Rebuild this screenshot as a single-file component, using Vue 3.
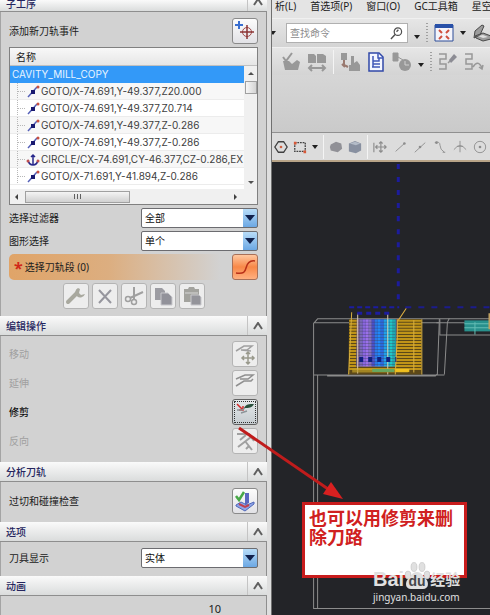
<script setup>
import { ref } from 'vue'

const events = [
  { type: 'goto', text: 'GOTO/X-74.691,Y-49.377,Z20.000' },
  { type: 'goto', text: 'GOTO/X-74.691,Y-49.377,Z0.714' },
  { type: 'goto', text: 'GOTO/X-74.691,Y-49.377,Z-0.286' },
  { type: 'goto', text: 'GOTO/X-74.691,Y-49.377,Z-0.286' },
  { type: 'circle', text: 'CIRCLE/CX-74.691,CY-46.377,CZ-0.286,EX' },
  { type: 'goto', text: 'GOTO/X-71.691,Y-41.894,Z-0.286' },
]
const filter = ref('全部')
const shape = ref('单个')
const toolView = ref('实体')
const menus = ['析(L)', '首选项(P)', '窗口(O)', 'GC工具箱', '星空']
const stripes = Array.from({ length: 17 }, (_, i) => 320 + i * 3)
const passes = [
  [358, '#7a5a8c'], [361, '#7a68b8'], [364, '#8a66e0'], [367, '#9a70e8'], [370, '#8470c0'],
  [373, '#4a50c8'], [376, '#2a78e8'], [379, '#2088f8'], [382, '#2a6ae0'], [385, '#20a0e8'],
  [388, '#18b8e0'], [391, '#20c8c8'], [394, '#20a8b0'],
]
</script>

<template>
  <div class="app">
    <aside class="panel">
      <header class="head clipped"><h2>子工序</h2><button class="fold" aria-label="折叠子工序"><svg viewBox="0 0 10 8"><path d="M1 7 5 1 9 7" /></svg></button></header>
      <section class="body events">
        <div class="row">
          <span>添加新刀轨事件</span>
          <button class="tool" aria-label="添加新刀轨事件">
            <svg viewBox="0 0 24 24"><path d="M6 2v8M2 6h8" stroke="#3a6fd0" stroke-width="2" /><circle cx="14" cy="13" r="4.5" stroke="#a04848" /><path d="M14 6v14M7 13h14" stroke="#8c3434" stroke-width="1.5" /></svg>
          </button>
        </div>
        <div class="list">
          <div class="list-title">名称</div>
          <div class="list-main">
            <ul>
              <li class="selected">CAVITY_MILL_COPY</li>
              <li v-for="(e, i) in events" :key="i">
                <svg viewBox="0 0 31 17">
                  <path d="M7.500 0v17M8 8.500h7" stroke="#b8b8b8" stroke-dasharray="1 1" />
                  <g v-if="e.type === 'goto'"><path d="M18 14 27 4" stroke="#5560b8" stroke-width="1.500" /><path d="M21 7h4v4h-4z" fill="#191970" /><circle cx="28" cy="4" r="1.500" fill="#c85040" /></g>
                  <g v-else><path d="M18 9q1 5 5 5t5-5M23 4v10M21 6l2-2 2 2" stroke="#28288c" stroke-width="1.500" /><circle cx="18" cy="10" r="1.500" fill="#c05050" /><circle cx="28" cy="10" r="1.500" fill="#c05050" /></g>
                </svg>{{ e.text }}
              </li>
            </ul>
            <div class="vbar"><i class="up"></i><i class="thumb"></i><i class="down"></i></div>
          </div>
          <div class="hbar"><i class="left"></i><span class="thumb"><i></i><i></i><i></i></span><i class="right"></i></div>
        </div>
        <div class="row field">
          <label for="filter">选择过滤器</label>
          <span class="combo"><select id="filter" v-model="filter"><option>全部</option></select><i></i></span>
        </div>
        <div class="row field">
          <label for="shape">图形选择</label>
          <span class="combo"><select id="shape" v-model="shape"><option>单个</option></select><i></i></span>
        </div>
        <div class="row segment">
          <span><b>*</b>选择刀轨段 (0)</span>
          <button class="tool orange" aria-label="选择刀轨段"><svg viewBox="0 0 24 24"><path d="M3 18c8 1 9-1 10-5s3-8 9-7" stroke="#b83018" stroke-width="1.500" /></svg></button>
        </div>
        <div class="actions">
          <button class="tool off" aria-label="编辑"><svg viewBox="0 0 24 24"><path d="m4 18 9-9" stroke="#a9a99f" stroke-width="4" stroke-linecap="round" /><path d="M14 4a5 5 0 1 0 7 6l-4 1-2-2 1-4z" fill="#a9a99f" /></svg></button>
          <button class="tool off" aria-label="删除"><svg viewBox="0 0 24 24"><path d="m6 6 12 13M18 6 6 19" stroke="#96969e" stroke-width="2" /></svg></button>
          <button class="tool off" aria-label="剪切"><svg viewBox="0 0 24 24"><path d="M12 3v12M21 8 8 14" stroke="#a0a0a0" stroke-width="2" /><circle cx="6" cy="15" r="2.500" stroke="#a0a0a0" stroke-width="1.500" /><circle cx="12" cy="18" r="2.500" stroke="#a0a0a0" stroke-width="1.500" /></svg></button>
          <button class="tool off" aria-label="复制"><svg viewBox="0 0 24 24"><path d="M4 4h7l3 3v9H4z" fill="#9c9ca2" /><path d="M10 9h7l4 4v8H10z" fill="#92929a" stroke="#c8c8cc" /></svg></button>
          <button class="tool off" aria-label="粘贴"><svg viewBox="0 0 24 24"><path d="M4 5h4l1-2h5l1 2h4v13H4z" fill="#a3a39e" /><path d="M5 9h13" stroke="#d8d8d8" /><path d="M11 11h8l2 2v8H11z" fill="#94949a" stroke="#c8c8cc" /></svg></button>
        </div>
      </section>

      <header class="head"><h2>编辑操作</h2><button class="fold" aria-label="折叠编辑操作"><svg viewBox="0 0 10 8"><path d="M1 7 5 1 9 7" /></svg></button></header>
      <section class="body edits">
        <div class="row off-text"><span>移动</span><button class="tool off" aria-label="移动"><svg viewBox="0 0 24 24"><path d="M3 9 11 4h8l-5 4H8l10 1" stroke="#a0a0a0" stroke-width="1.500" /><path d="M15 10v12M9 16h12M13 12l2-2 2 2M13 20l2 2 2-2M11 14l-2 2 2 2M19 14l2 2-2 2" stroke="#99998c" stroke-width="1.500" /></svg></button></div>
        <div class="row off-text"><span>延伸</span><button class="tool off" aria-label="延伸"><svg viewBox="0 0 24 24"><path d="M3 8 12 4h8l-5 4H7M3 15l8-5h7l2-2" stroke="#909090" stroke-width="1.500" /></svg></button></div>
        <div class="row strong"><span>修剪</span><button class="tool active" aria-label="修剪"><svg viewBox="0 0 24 24"><path d="m4 4 6 6M10 6v4H6" stroke="#d02828" stroke-width="1.500" /><path d="M11 8c2-4 5-4 10-4-2 4-5 4-10 4z" fill="#28503c" /><path d="M4 10h5l3-2M8 13l6-2" stroke="#8c9498" stroke-width="1.500" /></svg></button></div>
        <div class="row off-text"><span>反向</span><button class="tool off" aria-label="反向"><svg viewBox="0 0 24 24"><path d="M4 5h12l5 7M7 11l6-5M5 18 18 8M12 12l7 9M13 20l3-3" stroke="#a0a0a0" stroke-width="2" /></svg></button></div>
      </section>

      <header class="head"><h2>分析刀轨</h2><button class="fold" aria-label="折叠分析刀轨"><svg viewBox="0 0 10 8"><path d="M1 7 5 1 9 7" /></svg></button></header>
      <section class="body check">
        <div class="row"><span>过切和碰撞检查</span><button class="tool" aria-label="过切和碰撞检查"><svg viewBox="0 0 24 24"><path d="m3 16 5-3 6 3 7-3v2l-9 7-9-5z" fill="#8fa4e8" stroke="#5068b8" /><path d="m6 15 6 3 4-2" stroke="#c04050" stroke-width="2" /><path d="M12 4h4v10l-4 2z" fill="#5a66c0" /><path d="m3 7 3 4 5-8" stroke="#48a848" stroke-width="2.500" /></svg></button></div>
      </section>

      <header class="head"><h2>选项</h2><button class="fold" aria-label="折叠选项"><svg viewBox="0 0 10 8"><path d="M1 7 5 1 9 7" /></svg></button></header>
      <section class="body options">
        <div class="row field">
          <label for="tool-view">刀具显示</label>
          <span class="combo"><select id="tool-view" v-model="toolView"><option>实体</option></select><i></i></span>
        </div>
      </section>

      <header class="head"><h2>动画</h2><button class="fold" aria-label="折叠动画"><svg viewBox="0 0 10 8"><path d="M1 7 5 1 9 7" /></svg></button></header>
      <section class="body anim"><span>10</span></section>
    </aside>

    <main class="work">
      <nav class="menus"><a v-for="m in menus" :key="m" href="#">{{ m }}</a></nav>
      <div class="bar search">
        <i class="caret"></i>
        <div class="find">
          <input type="text" placeholder="查找命令" aria-label="查找命令" />
          <svg viewBox="0 0 14 14"><circle cx="8.500" cy="5" r="4" stroke="#505050" stroke-width="1.300" /><path d="M5.500 8 1 13M7 5l2-2" stroke="#505050" stroke-width="1.500" /></svg>
        </div>
        <i class="caret low"></i>
        <i class="grip"></i>
        <svg class="i20" viewBox="0 0 20 20"><path d="M1 2h18v16H1z" fill="#f4f4fa" stroke="#2c4c98" /><path d="M1 3h18" stroke="#2850a8" stroke-width="4" /><path d="M5 7l3 3M15 7l-3 3M5 16l3-3M15 16l-3-3" stroke="#d05040" stroke-width="2" /></svg>
        <i class="caret"></i>
        <svg class="i20" viewBox="0 0 20 20"><path d="m3 8 7-6 2 1-4 9-6 3zM3 13l8-3 8 3v3l-8 2-7-3z" fill="#9c9c9c" stroke="#484848" /><path d="m6 13 5-1 5 2-5 1z" fill="#e0e0e0" /></svg>
      </div>
      <div class="bar machining">
        <svg class="i20" viewBox="0 0 20 20"><path d="m2 5 3 4 6-8" stroke="#989898" stroke-width="2" /><path d="M2 9h6l3 3 5-4 3 2-2 8H4z" fill="#989898" /></svg>
        <svg class="i20" viewBox="0 0 20 20"><path d="M1 2h6l2 2v7H1zM10 2h6l3 2v7h-9z" fill="#989898" /><path d="M2 16h16M5 13l-3 3 3 3M15 13l3 3-3 3" stroke="#989898" stroke-width="2" /></svg>
        <i class="rule"></i>
        <svg class="i20" viewBox="0 0 20 20"><path d="M1 1h6v7H1zM11 4h3v7l3-2 3 4v6H9v-6h2z" fill="#989898" /><path d="M4 8v5l4 2M2 12l3 3" stroke="#9a7a70" stroke-width="2" /></svg>
        <svg class="i20" viewBox="0 0 20 20"><path d="M3 1h10l4 4v14H3z" fill="#f4f6ff" stroke="#3048a8" stroke-width="1.500" /><path d="M12 1v5h5M7 4v11M7 9h6v-3M7 12h7M6 15h8" stroke="#4058b8" stroke-width="1.500" /></svg>
        <svg class="i20" viewBox="0 0 20 20"><path d="M1 1h5v8H1zM6 5l5 3" fill="#989898" stroke="#989898" /><circle cx="13" cy="13" r="6" fill="#989898" /><path d="M13 9v4h4" stroke="#d0d0d0" /></svg>
        <i class="caret low"></i>
        <i class="grip"></i>
        <svg class="i20" viewBox="0 0 20 20"><path d="M1 2h7v5H2v5h6v5H1M10 11l5-5" stroke="#989898" stroke-width="1.500" /><path d="m11 8 5-6 3 3-6 6z" fill="#8c8c94" /></svg>
        <svg class="i20" viewBox="0 0 20 20"><path d="M1 2h7v5H2v5h6v5H1M9 15q5-8 9 1m-3-1 3 2 1-4" stroke="#989898" stroke-width="1.500" /></svg>
      </div>
      <div class="spare"></div>
      <div class="bar picks">
        <svg class="i16" viewBox="0 0 16 16"><path d="M5 2h6l4 6-4 6H5L1 8z" stroke="#404040" stroke-width="1.500" /><circle cx="8" cy="8" r="1.500" fill="#d06040" /></svg>
        <svg class="i16" viewBox="0 0 16 16"><path d="M2 3h12v10H2z" stroke="#404040" stroke-width="1.500" stroke-dasharray="2 1" /><path d="M1 2h3v3H1zM12 12h3v3h-3z" fill="#d85838" /></svg>
        <i class="caret"></i>
        <i class="rule"></i>
        <svg class="i16" viewBox="0 0 16 16"><path d="m2 5 6-3 6 2 1 6-5 4-8-2-1-4z" fill="#909096" /></svg>
        <svg class="i16" viewBox="0 0 16 16"><path d="m1 4 7-3 7 3v8l-6 3-8-2z" fill="#8890a0" /><path d="m2 4 7 2 5-2-6-2z" fill="#b4bcc8" /></svg>
        <i class="rule"></i>
        <div class="snaps">
          <svg class="i16" viewBox="0 0 16 16"><path d="M9 2v12M3 8h12M7 4l2-2 2 2M7 12l2 2 2-2M5 6 3 8l2 2M13 6l2 2-2 2M1 3v11" stroke="#8c8c8c" stroke-width="1.300" /></svg>
          <svg class="i16" viewBox="0 0 16 16"><path d="M3 13 13 4" stroke="#8c8c8c" /><circle cx="13" cy="4" r="1.500" fill="#8c8c8c" /></svg>
          <svg class="i16" viewBox="0 0 16 16"><path d="M2 14 14 3" stroke="#8c8c8c" /><circle cx="8" cy="8" r="1.500" fill="#8c8c8c" /></svg>
          <svg class="i16" viewBox="0 0 16 16"><path d="M2 3q6-2 6 3t5 8M11 14h3" stroke="#8c8c8c" /><circle cx="4" cy="3" r="1.500" fill="#8c8c8c" /></svg>
          <svg class="i16" viewBox="0 0 16 16"><path d="M1 11q7-9 14 0M8 1v13M5 7h6" stroke="#8c8c8c" /></svg>
          <svg class="i16" viewBox="0 0 16 16"><circle cx="8" cy="8" r="6.500" stroke="#8c8c8c" /><circle cx="8" cy="8" r="1.500" fill="#8c8c8c" /></svg>
        </div>
      </div>
      <div class="stage">
        <svg class="scene" viewBox="272 162 218 453" preserveAspectRatio="xMinYMin slice" aria-hidden="true">
          <g stroke="#8c8c8c">
            <path d="M313.500 607V323l4-4.500H490M313.500 322.500H439M317.500 374v233M313 374.500h131M327 375.500h108l2-2 2-55M313 607.500h177" />
            <path d="m444 374 3-52 2-4M439.500 319v15.500H490M436 322.500h54" />
          </g>
          <path d="M464 320h26v11h-26z" fill="#28908c" />
          <path d="M464 323.500h26M464 327.500h26M474.500 322v12" stroke="#64bcb4" />
          <path d="M489 313v16" stroke="#c0a060" stroke-width="2" />
          <path d="M349 319h72v55h-73z" fill="#5c4818" />
          <path v-for="y in stripes" :key="y" :d="`M349 ${y}.5h72`" stroke="#c09418" stroke-width="2" />
          <path d="M357 319h40l-2 47h-39z" fill="#3c4480" />
          <path v-for="[x, c] in passes" :key="x" :d="`M${x} 319v47`" :stroke="c" stroke-width="3" />
          <path v-for="y in stripes.slice(0, 15)" :key="'s' + y" :d="`M357 ${y + 2}h38`" stroke="#403c50" opacity=".35" />
          <path d="m351.500 312-3 62M421.500 319v55M413.500 320v52" stroke="#d8b040" />
          <path d="M357.500 313v60M387.500 312v62" stroke="#d8c8b0" />
          <path d="M397 319v18l-2 37M406 308l-8 12" stroke="#e0b040" />
          <path d="M352 368h56v4h-56z" fill="#c0a028" opacity=".7" />
          <path d="M372 370h22" stroke="#68a860" stroke-width="3" />
          <path d="M395 370h14" stroke="#f0c020" stroke-width="3" />
          <path d="M359 359h37" stroke="#102080" stroke-width="5" stroke-dasharray="4 5" />
          <path d="M349 307h50" stroke="#1c1ca0" stroke-width="2" stroke-dasharray="5 3" />
          <path d="M405 307h85" stroke="#1c1c8c" stroke-width="2" stroke-dasharray="6 7" />
          <path d="M357 313h34" stroke="#1c1ca0" stroke-width="3" stroke-dasharray="5 4" />
          <path d="M398 164v142" stroke="#1c1c9c" stroke-width="3" stroke-dasharray="5 8" />
        </svg>
        <p class="note">也可以用修剪来删除刀路</p>
        <div class="mark">
          <div class="brand"><span>Bai</span><svg viewBox="0 0 26 28"><g stroke="#b8b8b8" stroke-width=".5"><ellipse cx="4" cy="13" rx="3" ry="4" /><ellipse cx="10" cy="5" rx="3" ry="4.500" /><ellipse cx="18" cy="5" rx="3" ry="4.500" /><ellipse cx="23" cy="13" rx="3" ry="4" /></g><path d="M13 10c5 0 6 4 9 7s3 10-3 10H7c-6 0-6-7-3-10s4-7 9-7z" /><text x="13" y="24" text-anchor="middle">du</text></svg><span class="cn">经验</span></div>
          <div class="site">jingyan.baidu.com</div>
        </div>
      </div>
    </main>

    <svg class="arrow" viewBox="0 0 108 76" aria-hidden="true"><path d="m2 3 92 63" stroke="#c01c1c" stroke-width="3" /><path d="m106 74-20-5 8-12z" fill="#d82020" /></svg>
  </div>
</template>

<style>
body { margin: 0; overflow: hidden; background: #232428; }
</style>

<style scoped>
* { box-sizing: border-box; }
.app { position: relative; display: flex; min-height: 100vh; font: 10px/14px "Noto Sans", "Noto Sans CJK SC", sans-serif; color: #202020; }
svg { fill: none; display: block; flex: none; }
button, select, input { font: inherit; color: inherit; margin: 0; }
.panel { flex: 0 0 272px; min-width: 0; background: #d2d2d2; border-right: 1px solid #707070; box-shadow: inset -4px 0 #dedede, inset -5px 0 #8e8e8e; padding-right: 4px; display: flex; flex-direction: column; }
.head { height: 20px; display: flex; align-items: center; justify-content: space-between; background: linear-gradient(#fafafa, #dadcdc); border-bottom: 1px solid #8e8e8e; padding-left: 6px; flex: none; }
.head.clipped { height: 12px; overflow: hidden; align-items: flex-end; }
.head.clipped .fold { height: 19px; }
.head h2 { margin: 0; font-size: 10px; line-height: 14px; font-weight: 500; color: #25255e; }
.fold { width: 20px; height: 100%; border: 0; border-left: 1px solid #c4c4c4; background: none; padding: 0; display: grid; place-items: center; }
.fold svg { width: 10px; height: 8px; stroke: #606060; stroke-width: 2; }
.body { padding: 0 9px 0 8px; border-left: 1px solid #a4a4a4; flex: none; }
.row { display: flex; align-items: center; justify-content: space-between; }
.tool { width: 26px; height: 26px; padding: 0; border: 1px solid #8a8a8a; border-radius: 3px; background: linear-gradient(#fcfcfc, #e2e2e6); display: grid; place-items: center; }
.tool svg { width: 24px; height: 24px; }
.tool.off { border-color: #b4b4b4; background: #ededed; }
.tool.active { background: linear-gradient(#e4e8ea, #c6ccd0); outline: 1px dotted #303030; outline-offset: -3px; border-color: #606060; }
.tool.orange { background: linear-gradient(#ffc8a0, #f88848 50%, #ffb080); border-color: #a87058; }
.events { height: 304px; padding-top: 6px; }
.list { margin-top: 3px; border: 1px solid #808080; background: #fff; }
.list-title { height: 18px; padding: 2px 6px; background: linear-gradient(#f8f8f8, #e6e6e6); border-bottom: 1px solid #c0c0c0; }
.list-main { display: flex; height: 123px; }
ul { flex: 1; min-width: 0; list-style: none; margin: 0; padding: 0; overflow: hidden; font-family: Inter, sans-serif; font-size: 10px; }
li { height: 17px; line-height: 17px; display: flex; white-space: nowrap; color: #404040; border-bottom: 1px solid #ececec; overflow: hidden; }
li svg { width: 31px; height: 17px; }
li:nth-child(even) { background: #f7f7f7; }
li.selected { background: #3399f8; color: #e8f4ff; padding-left: 2px; border: 0; }
.vbar { flex: none; width: 13px; background: #f0f0f0; display: flex; flex-direction: column; align-items: center; }
.vbar .thumb { width: 12px; height: 13px; margin-top: 6px; border: 1px solid #a0a0a0; background: linear-gradient(90deg, #f6f6f6, #d4d4d4); }
.up, .down { border: 3px solid transparent; }
.up { border-top: 0; border-bottom-color: #505050; margin-top: 6px; }
.down { border-bottom: 0; border-top-color: #505050; margin-top: auto; margin-bottom: 5px; }
.hbar { height: 15px; background: #f0f0f0; display: flex; align-items: center; padding: 0 20px 0 5px; }
.left, .right { border: 3px solid transparent; }
.left { border-left: 0; border-right-color: #404040; }
.right { border-right: 0; border-left-color: #404040; margin-left: auto; }
.hbar .thumb { width: 105px; height: 12px; margin-left: 7px; border: 1px solid #a0a0a0; background: linear-gradient(#f4f4f4, #d0d0d0); display: flex; justify-content: center; align-items: center; gap: 2px; }
.hbar .thumb i { width: 1px; height: 5px; background: #606060; }
.field { height: 20px; margin-top: 3px; }
.combo { position: relative; width: 117px; height: 20px; }
.combo select { width: 100%; height: 100%; appearance: none; border: 1px solid #6c6c70; border-radius: 2px; background: linear-gradient(#b8dcf8, #6ca8e4) right / 14px 100% no-repeat #fff; padding: 0 18px 0 3px; color: #101010; }
.combo i { position: absolute; right: 3px; top: 7px; border: 5px solid transparent; border-top: 6px solid #10204c; border-bottom: 0; pointer-events: none; }
.segment { height: 26px; margin-top: 3px; border-radius: 5px; background: linear-gradient(90deg, #e0a468, #dcae80 40%, #d2d2d2 85%); padding-left: 5px; }
.segment b { color: #d02818; font-size: 16px; line-height: 10px; vertical-align: -3px; margin-right: 2px; }
.actions { display: flex; justify-content: center; gap: 3px; margin-top: 3px; }
.edits { height: 126px; padding-top: 5px; display: flex; flex-direction: column; gap: 3px; }
.off-text { color: #a0a0a0; }
.strong { color: #101010; font-weight: 500; }
.check { height: 40px; padding-top: 6px; }
.options { height: 34px; padding-top: 3px; }
.anim { flex: 1 0 20px; padding: 6px 46px 0 0; text-align: right; font-size: 11px; }
.work { flex: 1; min-width: 0; display: flex; flex-direction: column; background: #d6d6d6; }
.menus { height: 18px; display: flex; gap: 14px; overflow: hidden; white-space: nowrap; line-height: 12px; background: #e4e4e4; padding-left: 3px; }
.menus a { flex: none; color: #202020; text-decoration: none; }
.bar { display: flex; align-items: center; overflow: hidden; flex: none; background: linear-gradient(#e6e6e6, #d4d4d4); }
.i20 { width: 20px; height: 20px; }
.i16 { width: 14px; height: 14px; }
.caret { flex: none; border: 3px solid transparent; border-top: 4px solid #202020; border-bottom: 0; }
.caret.low { align-self: flex-end; margin-bottom: 8px; }
.grip { flex: none; width: 2px; height: 20px; background: repeating-linear-gradient(#a0a0a0 0 1px, transparent 1px 3px); }
.rule { flex: none; width: 1px; height: 24px; background: #f4f4f4; }
.search { height: 29px; gap: 6px; border-top: 1px solid #f0f0f0; }
.search .caret:first-child { margin-left: -2px; }
.find { display: flex; align-items: center; flex: 0 0 122px; min-width: 0; height: 20px; background: #fff; border: 1px solid #b0b0b0; padding-right: 4px; margin-left: 4px; }
.find input { flex: 1; width: 0; min-width: 0; border: 0; outline: 0; padding: 0 3px; background: none; }
.find input::placeholder { color: #8c8c8c; opacity: 1; }
.find svg { width: 13px; height: 13px; }
.machining { height: 28px; gap: 6px; padding-left: 9px; border-top: 1px solid #f0f0f0; }
.spare { height: 58px; background: linear-gradient(#d6d6d6, #cacaca); border-bottom: 1px solid #909090; }
.picks { height: 29px; gap: 5px; padding-left: 2px; background: #dcdcdc; border-bottom: 2px solid #b8a488; }
.snaps { display: flex; gap: 6px; }
.stage { position: relative; flex: 1; background: #232428; overflow: hidden; }
.scene { position: absolute; inset: 0; width: 100%; height: 100%; }
.note { position: absolute; left: 30px; top: 340px; width: 165px; height: 76px; margin: 0; border: 3px solid #c81c1c; background: #fff; color: #d02020; padding: 3px 4px; font: bold 18px/19px "Noto Sans CJK SC", sans-serif; }
.mark { position: absolute; left: 101px; top: 398px; color: #e0e0e0; }
.brand { display: flex; align-items: flex-end; height: 30px; font: bold 20px/22px "Liberation Sans", sans-serif; }
.brand svg { width: 26px; height: 28px; fill: #e0e0e0; }
.brand text { font: bold 14px "Liberation Sans", sans-serif; fill: #46474a; }
.brand .cn { font: bold 15px/22px "Noto Sans CJK SC", sans-serif; }
.site { font-size: 10px; line-height: 14px; }
.arrow { position: absolute; left: 237px; top: 425px; width: 108px; height: 76px; pointer-events: none; }
</style>
